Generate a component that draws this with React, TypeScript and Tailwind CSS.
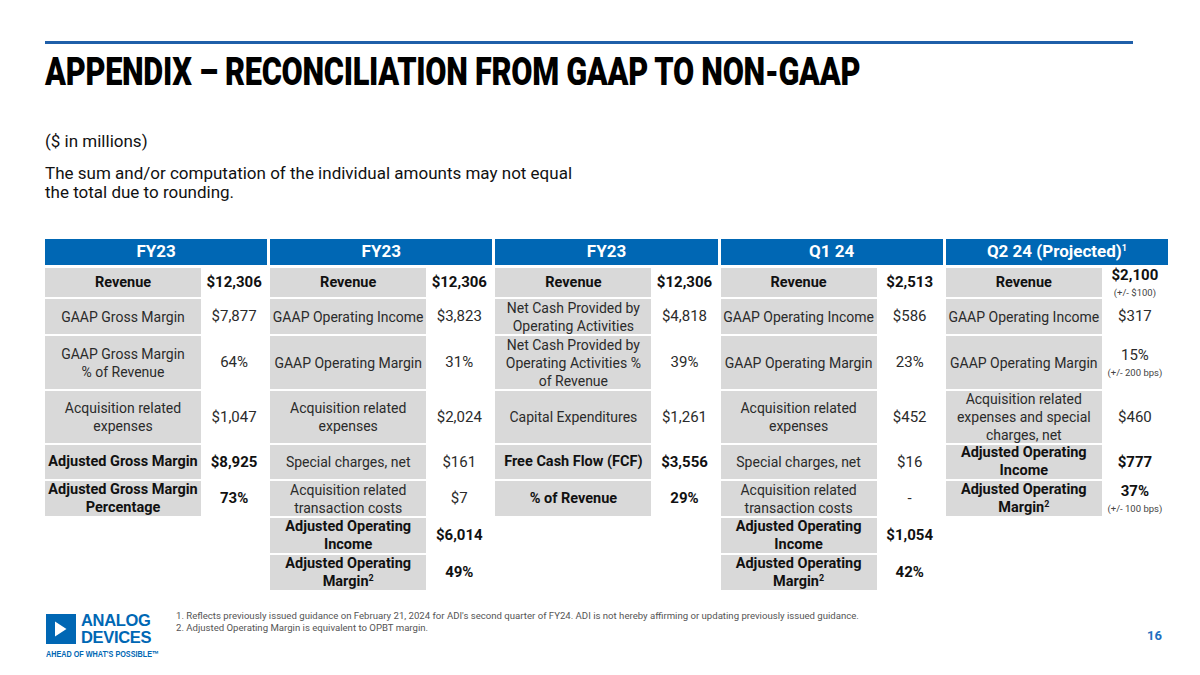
import type { ReactNode } from 'react';

type Cell = {
  label: ReactNode;
  value: ReactNode;
  bold?: boolean;
  sub?: string;
} | null;

type Group = { title: ReactNode; rows: Cell[] };

const rowHeights = ['h-[29px]', 'h-[35px]', 'h-[53px]', 'h-[52px]', 'h-[34px]', 'h-[35px]', 'h-[35px]', 'h-[35px]'];

const groups: Group[] = [
  {
    title: 'FY23',
    rows: [
      { label: 'Revenue', value: '$12,306', bold: true },
      { label: 'GAAP Gross Margin', value: '$7,877' },
      { label: <>GAAP Gross Margin<br />% of Revenue</>, value: '64%' },
      { label: <>Acquisition related<br />expenses</>, value: '$1,047' },
      { label: 'Adjusted Gross Margin', value: '$8,925', bold: true },
      { label: <>Adjusted Gross Margin<br />Percentage</>, value: '73%', bold: true },
      null,
      null,
    ],
  },
  {
    title: 'FY23',
    rows: [
      { label: 'Revenue', value: '$12,306', bold: true },
      { label: 'GAAP Operating Income', value: '$3,823' },
      { label: 'GAAP Operating Margin', value: '31%' },
      { label: <>Acquisition related<br />expenses</>, value: '$2,024' },
      { label: 'Special charges, net', value: '$161' },
      { label: <>Acquisition related<br />transaction costs</>, value: '$7' },
      { label: <>Adjusted Operating<br />Income</>, value: '$6,014', bold: true },
      { label: <>Adjusted Operating<br />Margin<sup className="text-[9px]">2</sup></>, value: '49%', bold: true },
    ],
  },
  {
    title: 'FY23',
    rows: [
      { label: 'Revenue', value: '$12,306', bold: true },
      { label: <>Net Cash Provided by<br />Operating Activities</>, value: '$4,818' },
      { label: <>Net Cash Provided by<br />Operating Activities %<br />of Revenue</>, value: '39%' },
      { label: 'Capital Expenditures', value: '$1,261' },
      { label: 'Free Cash Flow (FCF)', value: '$3,556', bold: true },
      { label: '% of Revenue', value: '29%', bold: true },
      null,
      null,
    ],
  },
  {
    title: 'Q1 24',
    rows: [
      { label: 'Revenue', value: '$2,513', bold: true },
      { label: 'GAAP Operating Income', value: '$586' },
      { label: 'GAAP Operating Margin', value: '23%' },
      { label: <>Acquisition related<br />expenses</>, value: '$452' },
      { label: 'Special charges, net', value: '$16' },
      { label: <>Acquisition related<br />transaction costs</>, value: '-' },
      { label: <>Adjusted Operating<br />Income</>, value: '$1,054', bold: true },
      { label: <>Adjusted Operating<br />Margin<sup className="text-[9px]">2</sup></>, value: '42%', bold: true },
    ],
  },
  {
    title: <>Q2 24 (Projected)<sup className="text-[9px]">1</sup></>,
    rows: [
      { label: 'Revenue', value: '$2,100', bold: true, sub: '(+/- $100)' },
      { label: 'GAAP Operating Income', value: '$317' },
      { label: 'GAAP Operating Margin', value: '15%', sub: '(+/- 200 bps)' },
      { label: <>Acquisition related<br />expenses and special<br />charges, net</>, value: '$460' },
      { label: <>Adjusted Operating<br />Income</>, value: '$777', bold: true },
      { label: <>Adjusted Operating<br />Margin<sup className="text-[9px]">2</sup></>, value: '37%', bold: true, sub: '(+/- 100 bps)' },
      null,
      null,
    ],
  },
];

function TableGroup({ group }: { group: Group }) {
  return (
    <div className="flex flex-col gap-[2px]">
      <div className="h-[26px] mb-[1px] bg-[#0067b4] text-white font-bold text-[17px] flex items-center justify-center">
        {group.title}
      </div>
      {group.rows.map((c, i) =>
        c === null ? (
          <div key={i} className={rowHeights[i]} />
        ) : (
          <div key={i} className={`${rowHeights[i]} flex`}>
            <div className={`w-[156px] bg-[#d9d9d9] flex items-center justify-center text-center leading-[18px] whitespace-nowrap ${c.bold ? 'font-bold text-[14.5px] text-[#111]' : 'text-[14px] text-[#2b2b2b]'}`}>
              <span>{c.label}</span>
            </div>
            <div className="flex-1 flex flex-col items-center justify-center leading-none">
              <span className={`text-[15px] ${c.bold ? 'font-bold text-[#111]' : 'text-[#2b2b2b]'}`}>{c.value}</span>
              {c.sub && <span className="text-[9.5px] text-[#444] mt-[5px]">{c.sub}</span>}
            </div>
          </div>
        )
      )}
    </div>
  );
}

export default function App() {
  return (
    <div className="w-[1200px] h-[675px] bg-white overflow-hidden flex flex-col" style={{ fontFamily: 'Roboto, "Liberation Sans", sans-serif' }}>
      <div className="ml-[45px] mt-[41px] w-[1088px] h-[3px] bg-[#1f5fa9]" />

      <h1 className="ml-[45px] mt-[9px] text-[38px] leading-[38px] font-black tracking-[-0.01em] text-black whitespace-nowrap origin-left scale-x-[0.81]">
        APPENDIX – RECONCILIATION FROM GAAP TO NON-GAAP
      </h1>

      <p className="ml-[45px] mt-[40px] text-[17px] leading-[20px] text-[#111]">($ in millions)</p>
      <p className="ml-[45px] mt-[13px] text-[17px] leading-[19px] text-[#111]">
        The sum and/or computation of the individual amounts may not equal
        <br />
        the total due to rounding.
      </p>

      <div className="ml-[45px] mt-[37px] w-[1123px] grid grid-cols-5 gap-x-[3px]">
        {groups.map((g, i) => (
          <TableGroup key={i} group={g} />
        ))}
      </div>

      <div className="ml-[46px] mt-[22px] flex">
        <div className="w-[130px] flex flex-col">
          <div className="flex items-center gap-[5px]">
            <svg width="30" height="30" viewBox="0 0 30 30">
              <rect width="30" height="30" fill="#0067b4" />
              <polygon points="9,7.5 20.5,15 9,22.5" fill="#fff" />
            </svg>
            <div className="flex flex-col text-[#0067b4] font-bold text-[16.5px] leading-[17px] tracking-[-0.02em]" style={{ fontFamily: '"Liberation Sans", Arial, sans-serif' }}>
              <span>ANALOG</span>
              <span>DEVICES</span>
            </div>
          </div>
          <div className="mt-[4px] text-[#0067b4] font-bold text-[8.5px] leading-none whitespace-nowrap origin-left scale-x-[0.85]" style={{ fontFamily: '"Liberation Sans", Arial, sans-serif' }}>
            AHEAD OF WHAT'S POSSIBLE™
          </div>
        </div>
        <div className="flex-1 flex">
          <div className="text-[9.6px] leading-[12px] text-[#555] mt-[-2px]">
            <p>1. Reflects previously issued guidance on February 21, 2024 for ADI's second quarter of FY24. ADI is not hereby affirming or updating previously issued guidance.</p>
            <p>2. Adjusted Operating Margin is equivalent to OPBT margin.</p>
          </div>
          <div className="ml-auto mr-[38px] mt-[14px] text-[13px] font-bold text-[#1f6fc0]">16</div>
        </div>
      </div>
    </div>
  );
}
